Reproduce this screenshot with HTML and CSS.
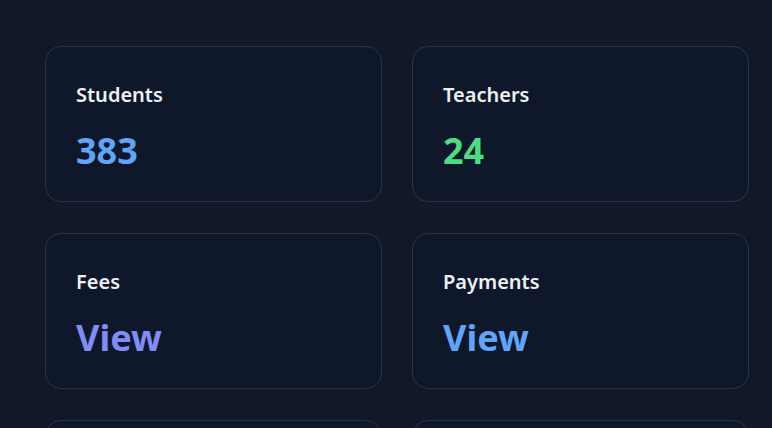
FILE: index.html
```html
<!DOCTYPE html>
<html lang="en">
<head>
<meta charset="utf-8">
<title>Dashboard</title>
<link rel="stylesheet" href="styles.css">
</head>
<body>
<main class="page">
  <div class="grid">
    <div class="card">
      <div class="label">Students</div>
      <div class="value blue">383</div>
    </div>
    <div class="card">
      <div class="label">Teachers</div>
      <div class="value green">24</div>
    </div>
    <div class="card">
      <div class="label">Fees</div>
      <div class="value indigo">View</div>
    </div>
    <div class="card">
      <div class="label">Payments</div>
      <div class="value blue">View</div>
    </div>
    <div class="card"></div>
    <div class="card"></div>
  </div>
</main>
</body>
</html>
```

FILE: styles.css
```css
html, body {
  margin: 0;
  padding: 0;
  background: #111827;
}
body {
  font-family: "Noto Sans", "Open Sans", "DejaVu Sans", sans-serif;
  color: #f3f4f6;
}
.page {
  padding: 46px 0 0 45px;
}
.grid {
  display: grid;
  grid-template-columns: 337px 337px;
  column-gap: 30px;
  row-gap: 31px;
}
.card {
  box-sizing: border-box;
  height: 156px;
  background: #0f172a;
  border: 1px solid #2a3546;
  border-radius: 16px;
  padding: 34px 30px 0 30px;
}
.label {
  font-size: 20px;
  line-height: 28px;
  font-weight: 600;
  color: #eef0f3;
}
.value {
  margin-top: 22px;
  font-size: 36px;
  line-height: 40px;
  font-weight: 700;
}
.blue { color: #60a5fa; }
.green { color: #4ade80; }
.indigo { color: #818cf8; }
```
